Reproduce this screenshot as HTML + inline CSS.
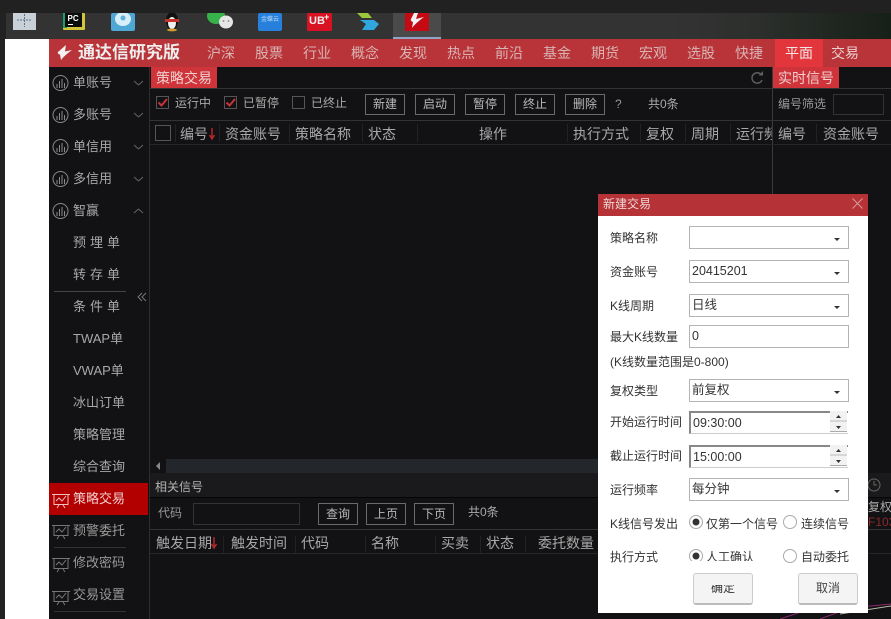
<!DOCTYPE html>
<html><head><meta charset="utf-8">
<style>
html,body{margin:0;padding:0;background:#222}
#r{position:relative;width:891px;height:619px;overflow:hidden;background:#222;font-family:"Liberation Sans","Noto Sans CJK SC",sans-serif;font-size:14px;color:#b4b4b4}
#r div,#r span,#r svg{position:absolute}
.t{white-space:nowrap;line-height:20px;height:20px}
.b{border:1px solid #6a6a6a;width:38px;height:19px;line-height:19px;text-align:center;font-size:12px;color:#b8b8b8}
.n{color:#d8b4b4;width:48px;text-align:center;top:43px;line-height:20px;height:20px}
.s{left:73px;white-space:nowrap;line-height:20px;height:20px;color:#a8a8a8;font-size:13px}
.l{font-size:12px;color:#333;left:610px;white-space:nowrap;line-height:16px;height:16px}
.i{left:689px;width:158px;height:21px;border:1px solid #b4b4b4;background:#fff;color:#333;font-size:12.5px;line-height:21px;text-indent:2px}
.a{left:834px;width:0;height:0;border-left:3px solid transparent;border-right:3px solid transparent;border-top:3px solid #333}
.v{width:1px;background:#222;top:124px;height:18px}
.w{width:1px;background:#222;top:536px;height:17px}
</style></head><body><div id="r">
<div style="left:6px;top:13px;width:885px;height:26px;background:linear-gradient(90deg,#333 0,#333 75%,#2c2f2c 85%,#162018 100%)"></div>
<div style="left:0;top:0;width:891px;height:13px;background:#212121"></div>
<div style="left:5px;top:39px;width:44px;height:580px;background:#fff"></div>
<div style="left:393px;top:13px;width:48px;height:26px;background:#4a4a4a"></div>
<div style="left:393px;top:37px;width:48px;height:2px;background:#8fa6c6"></div>

<svg style="left:0;top:13px" width="450" height="26" viewBox="0 0 450 26">
<rect x="13" y="0" width="23" height="17" fill="#c9d0d8"/><path d="M17 7h15M24.500 1v13" stroke="#5d7488" stroke-width="1" stroke-dasharray="2 1"/>
<rect x="63" y="0" width="22" height="17" rx="1" fill="#d3c53a"/><path d="M63 0h4v15h-4z" fill="#18a06c"/><rect x="65" y="0" width="17" height="14" fill="#0c0c0c"/><text x="67.500" y="8" font-size="8" font-weight="700" fill="#fff" font-family="Liberation Sans">PC</text><rect x="68" y="11" width="5" height="1" fill="#fff"/>
<rect x="111" y="0" width="24" height="18" rx="2" fill="#4fa7d6"/><ellipse cx="123" cy="6" rx="8" ry="7" fill="#d8eef8"/><circle cx="123" cy="5" r="2.500" fill="#5db0dc"/>
<ellipse cx="172" cy="8" rx="6" ry="9" fill="#111"/><ellipse cx="172" cy="10" rx="4" ry="6" fill="#eee"/><rect x="165" y="6" width="14" height="3" fill="#c8302a"/><ellipse cx="172" cy="17" rx="5" ry="1.400" fill="#d09a2a"/>
<ellipse cx="216" cy="3" rx="9" ry="8" fill="#37b24a"/><ellipse cx="226" cy="9" rx="7" ry="6.500" fill="#e6e6e6"/><circle cx="223.500" cy="8" r="1" fill="#999"/><circle cx="228.500" cy="8" r="1" fill="#999"/>
<rect x="258" y="0" width="24" height="18" rx="2" fill="#2680dc"/><text x="261" y="8" font-size="6" fill="#bcd9f5" font-family="Noto Sans CJK SC">金蝶云</text>
<rect x="307" y="0" width="25" height="18" rx="1" fill="#d81222"/><text x="309" y="11" font-size="11" font-weight="700" fill="#eee" font-family="Liberation Sans">UB</text><text x="324" y="7" font-size="9" font-weight="700" fill="#fff" font-family="Liberation Sans">+</text>
<path d="M357 0h11l4 5h-10z" fill="#9cc63c"/><path d="M360 7h14l5 4-5 6h-12l4-6z" fill="#2fa6de"/>
<rect x="405" y="0" width="24" height="18" fill="#c40a12"/><path d="M414 0l-3 6q-1 2 2 3l-1 6c3-4 8-8 12-11l-8 2 2-6z" fill="#f2f2f2"/>
</svg>

<!-- header -->
<div style="left:49px;top:39px;width:842px;height:28px;background:#b93438"></div>
<div style="left:775px;top:39px;width:48px;height:28px;background:#e2353c"></div>
<svg style="left:56px;top:44px" width="18" height="18" viewBox="0 0 18 18"><path d="M10 1L2 8q-1 2 2 2.500L5 16c3-4 7-7 11-10L9 7.500z" fill="#f2f2f2"/></svg>
<span class="t" style="left:78px;top:43px;font-size:17px;font-weight:700;color:#eee;letter-spacing:0">通达信研究版</span>
<span class="n" style="left:197px">沪深</span><span class="n" style="left:245px">股票</span><span class="n" style="left:293px">行业</span><span class="n" style="left:341px">概念</span><span class="n" style="left:389px">发现</span><span class="n" style="left:437px">热点</span><span class="n" style="left:485px">前沿</span><span class="n" style="left:533px">基金</span><span class="n" style="left:581px">期货</span><span class="n" style="left:629px">宏观</span><span class="n" style="left:677px">选股</span><span class="n" style="left:725px">快捷</span><span class="n" style="left:775px;color:#f2e6e6">平面</span><span class="n" style="left:821px;color:#e8d0d0">交易</span>

<!-- body -->
<div style="left:49px;top:67px;width:842px;height:552px;background:#121113"></div>
<div style="left:149px;top:67px;width:1px;height:552px;background:#2e2e2e"></div>
<div style="left:772px;top:67px;width:1px;height:405px;background:#3a3a3a"></div>
<div style="left:150px;top:88px;width:741px;height:1px;background:#333"></div>
<div style="left:150px;top:120px;width:741px;height:1px;background:#333"></div>
<div style="left:150px;top:144px;width:741px;height:1px;background:#262626"></div>
<div style="left:151px;top:67px;width:66px;height:21px;background:#cf343a"></div>
<span class="t" style="left:156px;top:68px;color:#eed0d0">策略交易</span>
<div style="left:773px;top:67px;width:66px;height:21px;background:#cf343a"></div>
<span class="t" style="left:778px;top:68px;color:#eed0d0">实时信号</span>
<svg style="left:750px;top:71px" width="14" height="14" viewBox="0 0 14 14"><path d="M11.500 4A5.200 5.200 0 1 0 12 9" fill="none" stroke="#5e5e5e" stroke-width="1.500"/><path d="M8.500 4.500h4.500V0z" fill="#5e5e5e"/></svg>

<!-- toolbar -->
<div style="left:156px;top:96px;width:11px;height:11px;border:1px solid #555"></div>
<svg style="left:157px;top:97px" width="12" height="12"><path d="M1.500 5.500l3 3 5.500-6.500" fill="none" stroke="#c8323a" stroke-width="2"/></svg>
<span class="t" style="left:175px;top:93px;font-size:12px;color:#aaa">运行中</span>
<div style="left:224px;top:96px;width:11px;height:11px;border:1px solid #555"></div>
<svg style="left:225px;top:97px" width="12" height="12"><path d="M1.500 5.500l3 3 5.500-6.500" fill="none" stroke="#c8323a" stroke-width="2"/></svg>
<span class="t" style="left:243px;top:93px;font-size:12px;color:#aaa">已暂停</span>
<div style="left:292px;top:96px;width:11px;height:11px;border:1px solid #555"></div>
<span class="t" style="left:311px;top:93px;font-size:12px;color:#aaa">已终止</span>
<div class="b" style="left:365px;top:94px">新建</div><div class="b" style="left:415px;top:94px">启动</div><div class="b" style="left:465px;top:94px">暂停</div><div class="b" style="left:515px;top:94px">终止</div><div class="b" style="left:565px;top:94px">删除</div>
<span class="t" style="left:615px;top:94px;font-size:12px;color:#999">?</span>
<span class="t" style="left:648px;top:94px;font-size:12px;color:#aaa">共0条</span>
<span class="t" style="left:778px;top:94px;font-size:12px;color:#999">编号筛选</span>
<div style="left:833px;top:94px;width:49px;height:19px;border:1px solid #333"></div>

<!-- table header -->
<div style="left:155px;top:125px;width:14px;height:14px;border:1px solid #555"></div>
<span class="t" style="left:180px;top:124px;color:#a8a8a8">编号</span>
<svg style="left:207px;top:127px" width="10" height="14"><path d="M5 1v10M2.500 8L5 12l2.500-4" fill="none" stroke="#b3272c" stroke-width="1.500"/></svg>
<span class="t" style="left:225px;top:124px;color:#a8a8a8">资金账号</span>
<span class="t" style="left:295px;top:124px;color:#a8a8a8">策略名称</span>
<span class="t" style="left:368px;top:124px;color:#a8a8a8">状态</span>
<span class="t" style="left:479px;top:124px;color:#a8a8a8">操作</span>
<span class="t" style="left:573px;top:124px;color:#a8a8a8">执行方式</span>
<span class="t" style="left:646px;top:124px;color:#a8a8a8">复权</span>
<span class="t" style="left:691px;top:124px;color:#a8a8a8">周期</span>
<div style="left:736px;top:124px;width:36px;height:20px;overflow:hidden"><span class="t" style="left:0;top:0;color:#a8a8a8">运行频率</span></div>
<span class="t" style="left:778px;top:124px;color:#a8a8a8">编号</span>
<span class="t" style="left:823px;top:124px;color:#a8a8a8">资金账号</span>
<div class="v" style="left:175px"></div><div class="v" style="left:219px"></div><div class="v" style="left:289px"></div><div class="v" style="left:362px"></div><div class="v" style="left:417px"></div><div class="v" style="left:567px"></div><div class="v" style="left:640px"></div><div class="v" style="left:685px"></div><div class="v" style="left:730px"></div><div class="v" style="left:816px"></div>

<!-- sidebar -->
<div style="left:49px;top:483px;width:99px;height:32px;background:#b20000"></div>
<svg style="left:49px;top:67px" width="100" height="552" viewBox="0 0 100 552" fill="none" stroke="#8a8a8a">
<g><circle cx="11.500" cy="16" r="7.500"/><path d="M8 21v-4M10.500 21v-7M13 21v-9M15.500 21v-5"/></g>
<g transform="translate(0,32)"><circle cx="11.500" cy="16" r="7.500"/><path d="M8 21v-4M10.500 21v-7M13 21v-9M15.500 21v-5"/></g>
<g transform="translate(0,64)"><circle cx="11.500" cy="16" r="7.500"/><path d="M8 21v-4M10.500 21v-7M13 21v-9M15.500 21v-5"/></g>
<g transform="translate(0,96)"><circle cx="11.500" cy="16" r="7.500"/><path d="M8 21v-4M10.500 21v-7M13 21v-9M15.500 21v-5"/></g>
<g transform="translate(0,128)"><circle cx="11.500" cy="16" r="7.500"/><path d="M8 21v-4M10.500 21v-7M13 21v-9M15.500 21v-5"/></g>
<path d="M85 14l4.500 4 4.500-4M85 46l4.500 4 4.500-4M85 78l4.500 4 4.500-4M85 110l4.500 4 4.500-4M85 146l4.500-4 4.500 4" stroke="#666"/>
<path d="M93 226l-4 4 4 4M97 226l-4 4 4 4" stroke="#777"/>
<g transform="translate(0,425)" stroke="#f0c0c0"><path d="M5 2.500h14v10H5zM3 2.500h18M7 9l3-3 3 3 4-5M10 13l-2 3M14 13l2 3"/></g>
<g transform="translate(0,456)" stroke="#777"><path d="M5 2.500h14v10H5zM3 2.500h18M7 9l3-3 3 3 4-5M10 13l-2 3M14 13l2 3"/></g>
<g transform="translate(0,489)" stroke="#777"><path d="M5 2.500h14v10H5zM3 2.500h18M7 9l3-3 3 3 4-5M10 13l-2 3M14 13l2 3"/></g>
<g transform="translate(0,522)" stroke="#777"><path d="M5 2.500h14v10H5zM3 2.500h18M7 9l3-3 3 3 4-5M10 13l-2 3M14 13l2 3"/></g>
</svg>
<div style="left:54px;top:291px;width:72px;height:1px;background:#444"></div>
<div style="left:54px;top:547px;width:72px;height:1px;background:#333"></div>
<div style="left:54px;top:611px;width:72px;height:1px;background:#333"></div>
<span class="s" style="top:73px">单账号</span><span class="s" style="top:105px">多账号</span><span class="s" style="top:137px">单信用</span><span class="s" style="top:169px">多信用</span><span class="s" style="top:201px">智赢</span>
<span class="s" style="top:233px;letter-spacing:4px">预埋单</span><span class="s" style="top:265px;letter-spacing:4px">转存单</span><span class="s" style="top:297px;letter-spacing:4px">条件单</span><span class="s" style="top:329px">TWAP单</span><span class="s" style="top:361px">VWAP单</span><span class="s" style="top:393px">冰山订单</span><span class="s" style="top:425px">策略管理</span><span class="s" style="top:457px">综合查询</span>
<span class="s" style="top:489px;color:#f0d0d0">策略交易</span><span class="s" style="top:521px;color:#999">预警委托</span><span class="s" style="top:553px;color:#999">修改密码</span><span class="s" style="top:585px;color:#999">交易设置</span>

<!-- scrollbar -->
<div style="left:150px;top:459px;width:448px;height:14px;background:#23262b"></div>
<div style="left:150px;top:459px;width:16px;height:14px;background:#121113"></div>
<div style="left:156px;top:462px;width:0;height:0;border-right:4px solid #888;border-top:4px solid transparent;border-bottom:4px solid transparent"></div>

<!-- bottom panel -->
<div style="left:150px;top:473px;width:741px;height:24px;background:#1a1a1c"></div>
<div style="left:150px;top:497px;width:741px;height:1px;background:#050505"></div>
<span class="t" style="left:155px;top:477px;font-size:12px;color:#b4b4b4">相关信号</span>
<span class="t" style="left:158px;top:503px;font-size:12px;color:#999">代码</span>
<div style="left:193px;top:503px;width:105px;height:20px;border:1px solid #333"></div>
<div class="b" style="left:318px;top:503px;height:20px;line-height:20px">查询</div><div class="b" style="left:366px;top:503px;height:20px;line-height:20px">上页</div><div class="b" style="left:414px;top:503px;height:20px;line-height:20px">下页</div>
<span class="t" style="left:468px;top:502px;font-size:12px;color:#aaa">共0条</span>
<div style="left:150px;top:529px;width:741px;height:1px;background:#333"></div>
<div style="left:150px;top:553px;width:741px;height:1px;background:#262626"></div>
<span class="t" style="left:156px;top:533px;color:#a8a8a8">触发日期</span>
<svg style="left:209px;top:536px" width="10" height="14"><path d="M5 1v10M2.500 8L5 12l2.500-4" fill="none" stroke="#b3272c" stroke-width="1.500"/></svg>
<span class="t" style="left:231px;top:533px;color:#a8a8a8">触发时间</span>
<span class="t" style="left:301px;top:533px;color:#a8a8a8">代码</span>
<span class="t" style="left:371px;top:533px;color:#a8a8a8">名称</span>
<span class="t" style="left:441px;top:533px;color:#a8a8a8">买卖</span>
<span class="t" style="left:486px;top:533px;color:#a8a8a8">状态</span>
<span class="t" style="left:538px;top:533px;color:#a8a8a8">委托数量</span>
<div class="w" style="left:223px"></div><div class="w" style="left:295px"></div><div class="w" style="left:365px"></div><div class="w" style="left:435px"></div><div class="w" style="left:480px"></div><div class="w" style="left:525px"></div>

<!-- right remainder -->
<svg style="left:866px;top:477px" width="16" height="16" viewBox="0 0 16 16" fill="none" stroke="#666"><circle cx="8" cy="8" r="6"/><path d="M8 4v4h3"/></svg>
<span class="t" style="left:868px;top:497px;font-size:12px;color:#aaa">复权</span>
<span class="t" style="left:868px;top:512px;font-size:12px;color:#8a2a2e">F103</span>
<svg style="left:780px;top:600px" width="111" height="19" viewBox="0 0 111 19" fill="none"><path d="M0 19L30 9l30-2M40 19L70 8l41-4" stroke="#8a2a6a"/><path d="M60 14l51-8" stroke="#bba"/></svg>

<!-- dialog -->
<div style="left:598px;top:194px;width:270px;height:419px;background:#fff;z-index:2"></div>
<div style="left:598px;top:194px;width:270px;height:22px;background:#b53236;z-index:2"></div>
<div id="d" style="left:0;top:0;width:891px;height:619px;z-index:3">
<span class="t" style="left:603px;top:194px;font-size:12px;line-height:21px;color:#eed8d8">新建交易</span>
<svg style="left:852px;top:198px" width="11" height="11"><path d="M.5.500l10 10M10.500.5l-10 10" stroke="#d89a9a"/></svg>

<span class="l" style="top:230px">策略名称</span><div class="i" style="top:226px"></div><div class="a" style="top:238px"></div>
<span class="l" style="top:264px">资金账号</span><div class="i" style="top:260px">20415201</div><div class="a" style="top:272px"></div>
<span class="l" style="top:298px">K线周期</span><div class="i" style="top:294px">日线</div><div class="a" style="top:306px"></div>
<span class="l" style="top:329px">最大K线数量</span><div class="i" style="top:325px">0</div>
<span class="l" style="top:354px">(K线数量范围是0-800)</span>
<span class="l" style="top:383px">复权类型</span><div class="i" style="top:379px">前复权</div><div class="a" style="top:391px"></div>
<span class="l" style="top:414px">开始运行时间</span><div class="i" style="top:411px;border-top:2px solid #888;border-left:2px solid #888;width:157px;height:20px;border-right:none;border-bottom-color:#ccc">09:30:00</div>
<span class="l" style="top:448px">截止运行时间</span><div class="i" style="top:445px;border-top:2px solid #888;border-left:2px solid #888;width:157px;height:20px;border-right:none;border-bottom-color:#ccc">15:00:00</div>
<div style="left:830px;top:411px;width:17px;height:20px;background:linear-gradient(#f2f2f2 0,#f2f2f2 45%,#bbb 50%,#f2f2f2 55%);border-bottom:1px solid #aaa"></div>
<div style="left:830px;top:445px;width:17px;height:20px;background:linear-gradient(#f2f2f2 0,#f2f2f2 45%,#bbb 50%,#f2f2f2 55%);border-bottom:1px solid #aaa"></div>
<svg style="left:835px;top:414px" width="8" height="50" viewBox="0 0 8 50" fill="#333"><path d="M1 4h5L3.500 1zM1 12h5l-2.500 3zM1 38h5l-2.500-3zM1 46h5l-2.500 3z"/></svg>
<span class="l" style="top:482px">运行频率</span><div class="i" style="top:478px">每分钟</div><div class="a" style="top:490px"></div>
<span class="l" style="top:516px">K线信号发出</span>
<span class="l" style="top:549px">执行方式</span>
<svg style="left:686px;top:512px" width="120" height="52" viewBox="0 0 120 52" fill="#fff" stroke="#aaa">
<circle cx="10" cy="10" r="6.500"/><circle cx="10" cy="10" r="3.500" fill="#333" stroke="none"/>
<circle cx="104" cy="10" r="6.500"/>
<circle cx="10" cy="44" r="6.500"/><circle cx="10" cy="44" r="3.500" fill="#333" stroke="none"/>
<circle cx="104" cy="44" r="6.500"/>
</svg>
<span class="l" style="left:706px;top:516px">仅第一个信号</span><span class="l" style="left:801px;top:516px">连续信号</span>
<span class="l" style="left:706px;top:549px">人工确认</span><span class="l" style="left:801px;top:549px">自动委托</span>
<div style="left:688px;top:561px;width:70px;height:5px;background:#fff"></div>
<div style="left:693px;top:573px;width:58px;height:29px;border:1px solid #ccc;border-bottom:2px solid #bbb;border-radius:3px;background:#f4f4f4;text-align:center;line-height:29px;font-size:12px;color:#333">确定</div>
<div style="left:708px;top:581px;width:30px;height:4px;background:#f4f4f4"></div>
<div style="left:798px;top:573px;width:58px;height:29px;border:1px solid #ccc;border-bottom:2px solid #bbb;border-radius:3px;background:#f4f4f4;text-align:center;line-height:29px;font-size:12px;color:#444">取消</div>
</div>
</div></body></html>
